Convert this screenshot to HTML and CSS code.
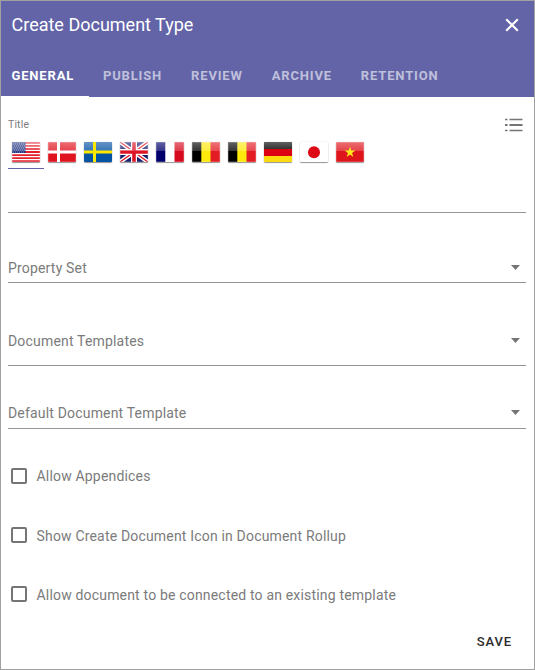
FILE: index.html
```html
<!DOCTYPE html>
<html lang="en">
<head>
<meta charset="utf-8">
<title>Create Document Type</title>
<link rel="stylesheet" href="styles.css">
</head>
<body>
<svg class="defs" aria-hidden="true">
  <defs>
    <linearGradient id="gloss" x1="0" y1="0" x2="0" y2="1">
      <stop offset="0" stop-color="#fff" stop-opacity=".38"/>
      <stop offset="1" stop-color="#fff" stop-opacity=".2"/>
    </linearGradient>
    <symbol id="shine" viewBox="0 0 28 20">
      <path d="M0 0H28V9H0Z" fill="url(#gloss)"/>
      <path d="M.5.5H27.500V19.500H.5Z" fill="none" stroke="#fff" stroke-opacity=".18"/>
    </symbol>
    <symbol id="belgium" viewBox="0 0 28 20">
      <path d="M0 0H28V20H0Z" fill="#ffe90c"/><path d="M0 0H9.300V20H0Z"/><path d="M18.500 0H28V20H18.500Z" fill="#e31b23"/>
    </symbol>
  </defs>
</svg>
<main class="dialog">
  <header class="header">
    <div class="title-bar">
      <h1>Create Document Type</h1>
      <svg class="close" viewBox="0 0 14 14"><path d="M1.200 1.200 12.800 12.800M12.800 1.200 1.200 12.800"/></svg>
    </div>
    <nav class="tabs">
      <a class="tab active">GENERAL</a>
      <a class="tab">PUBLISH</a>
      <a class="tab">REVIEW</a>
      <a class="tab">ARCHIVE</a>
      <a class="tab">RETENTION</a>
    </nav>
  </header>
  <section class="body">
    <div class="title-row">
      <span class="caption">Title</span>
      <svg class="list" viewBox="0 0 18 14"><path d="M0 1.500H2.500M4.500 1.500H17.500M0 12.500H2.500M4.500 12.500H17.500" stroke-width="1.600"/><path d="M0 7H2.500M4.500 7H17.500" stroke-width="2"/></svg>
    </div>
    <div class="flags">
      <div class="flag selected"><svg viewBox="0 0 28 20"><path d="M0 0H28V20H0Z" fill="#fff"/><path d="M0 .8H28M0 3.900H28M0 7H28M0 10H28M0 13.100H28M0 16.200H28M0 19.200H28" stroke="#e3202c" stroke-width="1.800"/><path d="M0 0H13.500V11H0Z" fill="#1e2f7e"/><path d="M1 2H13M2 4H13M1 6H13M2 8H13M1 10H13" stroke="#939dcb" stroke-dasharray="1 1"/><use href="#shine"/></svg></div>
      <div class="flag"><svg viewBox="0 0 28 20"><path d="M0 0H28V20H0Z" fill="#e0141e"/><path d="M10.500 0V20M0 10H28" stroke="#fff" stroke-width="3"/><use href="#shine"/></svg></div>
      <div class="flag"><svg viewBox="0 0 28 20"><path d="M0 0H28V20H0Z" fill="#0553a4"/><path d="M0 0H28V9H0Z" fill="url(#gloss)"/><path d="M10.500 0V20M0 10H28" stroke="#ffe800" stroke-width="3"/></svg></div>
      <div class="flag"><svg viewBox="0 0 28 20"><path d="M0 0H28V20H0Z" fill="#18216f"/><path d="M0 0 28 20M28 0 0 20" stroke="#fff" stroke-width="4.200"/><path d="M0 0 28 20M28 0 0 20" stroke="#e0141e" stroke-width="1.300"/><path d="M14 0V20M0 10H28" stroke="#fff" stroke-width="6"/><path d="M14 0V20M0 10H28" stroke="#dc1426" stroke-width="3.600"/><use href="#shine"/></svg></div>
      <div class="flag"><svg viewBox="0 0 28 20"><path d="M0 0H28V20H0Z" fill="#fff"/><path d="M0 0H9.300V20H0Z" fill="#00006c"/><path d="M18.500 0H28V20H18.500Z" fill="#d70b20"/><use href="#shine"/></svg></div>
      <div class="flag"><svg viewBox="0 0 28 20"><use href="#belgium"/><use href="#shine"/></svg></div>
      <div class="flag"><svg viewBox="0 0 28 20"><use href="#belgium"/><use href="#shine"/></svg></div>
      <div class="flag"><svg viewBox="0 0 28 20"><path d="M0 0H28V7H0Z"/><path d="M0 7H28V14H0Z" fill="#db0012"/><path d="M0 14H28V20H0Z" fill="#fbdb10"/><path d="M0 0H28V7H0Z" fill="url(#gloss)"/></svg></div>
      <div class="flag"><svg viewBox="0 0 28 20"><path d="M0 0H28V20H0Z" fill="#fff"/><circle cx="14" cy="10.300" r="6" fill="#dc0814"/></svg></div>
      <div class="flag"><svg viewBox="0 0 28 20"><path d="M0 0H28V20H0Z" fill="#df151c"/><use href="#shine"/><path d="M14 4.700 15.300 8.600H19.400L16.100 11 17.300 15 14 12.600 10.700 15 11.900 11 8.600 8.600H12.700Z" fill="#ffe91b"/></svg></div>
    </div>
    <div class="input"></div>
    <div class="select property"><span>Property Set</span><i class="arrow"></i></div>
    <div class="select templates"><span>Document Templates</span><i class="arrow"></i></div>
    <div class="select default"><span>Default Document Template</span><i class="arrow"></i></div>
    <div class="checks">
      <label class="check"><i class="box"></i><span>Allow Appendices</span></label>
      <label class="check low"><i class="box"></i><span>Show Create Document Icon in Document Rollup</span></label>
      <label class="check low"><i class="box"></i><span>Allow document to be connected to an existing template</span></label>
    </div>
  </section>
  <footer class="footer"><span class="save">SAVE</span></footer>
</main>
</body>
</html>
```
FILE: styles.css
```css
* { box-sizing: border-box; }
body { margin: 0; background: #fff; font-family: Roboto, sans-serif; }
.defs { position: absolute; width: 0; height: 0; }
.dialog {
  width: 535px; height: 670px;
  border: 1px solid #a0a0a0;
  background: #fff;
  display: flex; flex-direction: column;
}
.header { height: 96px; flex: none; background: #6264a7; color: #fff; }
.title-bar {
  height: 48px; padding: 0 15px 0 10.500px;
  display: flex; align-items: center; justify-content: space-between;
}
h1 { margin: 0; font-size: 18px; line-height: 24px; font-weight: 400; }
.close { width: 14px; height: 14px; fill: none; stroke: #fff; stroke-width: 2.200; }
.tabs { display: flex; height: 48px; padding-top: 6px; }
.tab {
  padding: 0 15px 0 14px; height: 42px; line-height: 42px;
  font-size: 13px; font-weight: 700; letter-spacing: .830px;
  color: rgba(255, 255, 255, .6);
}
.tab.active { width: 88px; padding: 0 0 0 10.500px; color: #fff; border-bottom: 1px solid #fff; }
.body { padding: 0 8px 0 7px; color: #7b7b7b; }
.title-row { height: 42px; padding-top: 14px; display: flex; justify-content: space-between; }
.caption { font-size: 10.500px; line-height: 27px; letter-spacing: .15px; }
.list { width: 18px; height: 14px; margin: 7px 3px 0 0; fill: none; stroke: #757575; }
.flags { display: flex; height: 30px; }
.flag { width: 36px; padding: 3px 4.300px 0 3.700px; height: 30px; }
.flag svg {
  display: block; width: 28px; height: 20px; border-radius: 1px;
  box-shadow: 0 1px 1px rgba(0, 0, 0, .4), 0 0 1px rgba(0, 0, 0, .3);
}
.selected { border-bottom: 1px solid #6264a7; }
.input { height: 44px; border-bottom: 1px solid #949494; }
.select {
  display: flex; justify-content: space-between; align-items: flex-start;
  border-bottom: 1px solid #949494;
  font-size: 14px; line-height: 20px; letter-spacing: .18px;
}
.property { height: 70px; padding-top: 45px; }
.templates { height: 83px; padding-top: 48px; }
.default { height: 63px; padding-top: 37px; }
.arrow {
  width: 9px; height: 5px; margin: 7px 6px 0 0;
  background: #757575; clip-path: polygon(0 0, 100% 0, 50% 100%);
}
.checks { padding-top: 37px; display: flex; flex-direction: column; gap: 39px; }
.check { display: flex; align-items: center; height: 20px; padding-left: 2.500px; font-size: 14px; letter-spacing: .18px; }
.low span { padding-top: 2px; }
.box { width: 16px; height: 16px; border: 2px solid #757575; border-radius: 2px; margin-right: 10px; }
.footer { margin-top: auto; height: 55px; padding: 17px 22px 0 0; text-align: right; }
.save { font-size: 13px; line-height: 20px; font-weight: 500; letter-spacing: .9px; color: #2a2a2a; }
```
